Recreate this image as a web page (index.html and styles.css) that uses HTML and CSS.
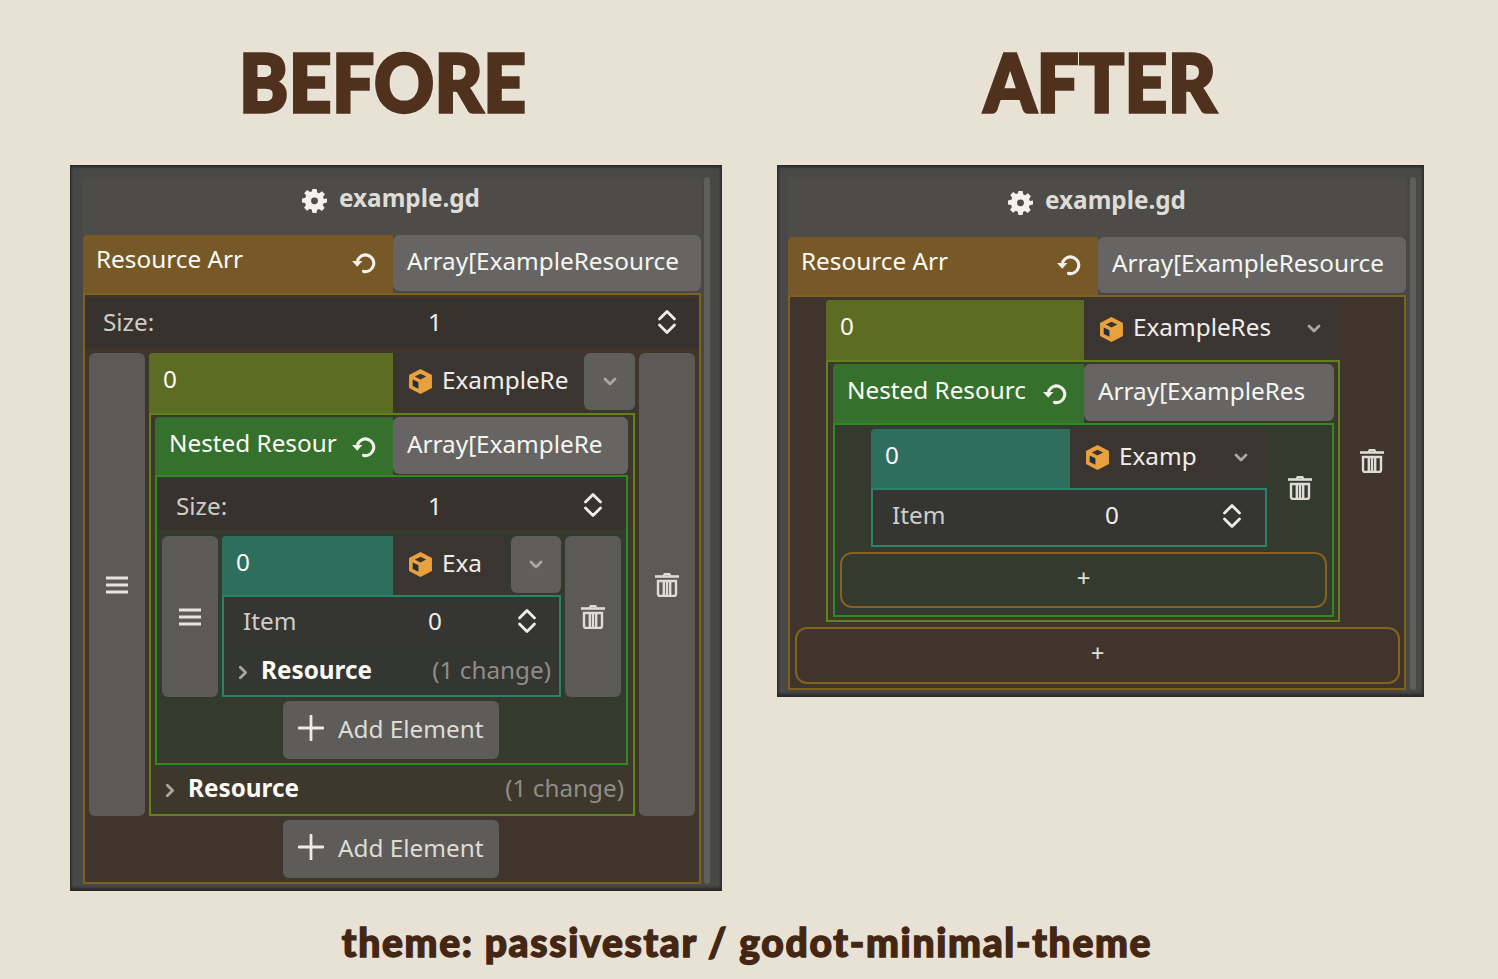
FILE: index.html
```html
<!DOCTYPE html>
<html lang="en">
<head>
<meta charset="utf-8">
<title>Before and after</title>
<link rel="stylesheet" href="styles.css">
</head>
<body>
<svg class="defs" width="0" height="0" aria-hidden="true">
  <symbol id="gear" viewBox="0 0 24 24"><path fill-rule="evenodd" d="M10 1h4l.6 3.2 1.9.8 2.7-1.8 2.8 2.8-1.8 2.7.8 1.9L24 10v4l-3.2.6-.8 1.9 1.8 2.7-2.8 2.8-2.7-1.800-1.900.8L14 24h-4l-.6-3.200-1.900-.8-2.700 1.800-2.800-2.800 1.800-2.700-.8-1.900L0 14v-4l3.200-.6.8-1.900L2.200 4.800 5 2l2.700 1.800 1.900-.8zM12 9a3.300 3.300 0 1 0 0 6.600 3.300 3.300 0 0 0 0-6.600z" fill="currentColor"/></symbol>
  <symbol id="undo" viewBox="0 0 24 24"><path d="M6.500 10.500A8 8 0 1 1 12 21.500" fill="none" stroke="currentColor" stroke-width="3" stroke-linecap="round"/><path d="M1 11.500l5 5.500 5-5.500z" fill="currentColor"/></symbol>
  <symbol id="cube" viewBox="0 0 24 24"><path d="M12 0l11 5.700v12.600L12 24 1 18.300V5.700z" fill="#e8a13c"/><path d="M12 4.500l5.500 2.800L12 10 6.500 7.300z" fill="#3a3431"/><path d="M4.500 10l5.500 2.800V19l-5.500-2.800z" fill="#1f3040"/></symbol>
  <symbol id="chev" viewBox="0 0 14 10"><path d="M2 2l5 5 5-5" fill="none" stroke="currentColor" stroke-width="2.800" stroke-linecap="round" stroke-linejoin="round"/></symbol>
  <symbol id="updown" viewBox="0 0 20 26"><path d="M2.500 10L10 2.500 17.500 10M2.500 16l7.500 7.500 7.500-7.500" fill="none" stroke="currentColor" stroke-width="2.800" stroke-linecap="round" stroke-linejoin="round"/></symbol>
  <symbol id="menu" viewBox="0 0 22 18"><path d="M0 2h22M0 9h22M0 16h22" stroke="currentColor" stroke-width="3"/></symbol>
  <symbol id="trash" viewBox="0 0 24 24"><path d="M8.500 3l1-2h5l1 2" fill="none" stroke="currentColor" stroke-width="1.800"/><path d="M0 3.500h24" stroke="currentColor" stroke-width="2.600"/><path d="M3 8h18v13a2 2 0 0 1-2 2H5a2 2 0 0 1-2-2z" fill="none" stroke="currentColor" stroke-width="2.400"/><path d="M8.800 9v13M12 9v13M15.200 9v13" stroke="currentColor" stroke-width="2.400"/></symbol>
  <symbol id="plus" viewBox="0 0 26 26"><path d="M13 1v24M1 13h24" stroke="currentColor" stroke-width="2.800" stroke-linecap="round"/></symbol>
  <symbol id="caret" viewBox="0 0 10 14"><path d="M2 2l5 5-5 5" fill="none" stroke="currentColor" stroke-width="2.600" stroke-linecap="round" stroke-linejoin="round"/></symbol>
</svg>

<main class="page">
  <section class="col col-before">
    <h1 class="title title-before">BEFORE</h1>
    <div class="panel panel-before">
      <div class="body">
        <div class="script"><svg class="i-gear"><use href="#gear"/></svg><span>example.gd</span></div>
        <div class="head">
          <div class="label orange label-root"><span>Resource Arr</span><svg class="i-undo"><use href="#undo"/></svg></div>
          <div class="value">Array[ExampleResource</div>
        </div>
        <div class="box box-orange box-root">
          <div class="row row-size">
            <span class="row-name">Size:</span><span class="row-val">1</span><svg class="i-updown"><use href="#updown"/></svg>
          </div>
          <div class="entry">
            <div class="handle"><svg class="i-menu"><use href="#menu"/></svg></div>
            <div class="entry-main">
              <div class="head">
                <div class="label olive el-a">0</div>
                <div class="drop drop-a"><svg class="i-cube"><use href="#cube"/></svg><span>ExampleRe</span></div>
                <div class="arrow"><svg class="i-chev"><use href="#chev"/></svg></div>
              </div>
              <div class="box box-olive box-a">
                <div class="head">
                  <div class="label green nl-a"><span>Nested Resour</span><svg class="i-undo"><use href="#undo"/></svg></div>
                  <div class="value nv-a">Array[ExampleRe</div>
                </div>
                <div class="box box-green box-b">
                  <div class="row row-size row-b">
                    <span class="row-name">Size:</span><span class="row-val">1</span><svg class="i-updown"><use href="#updown"/></svg>
                  </div>
                  <div class="entry entry-b">
                    <div class="handle"><svg class="i-menu"><use href="#menu"/></svg></div>
                    <div class="entry-main em-b">
                      <div class="head">
                        <div class="label teal tl-b">0</div>
                        <div class="drop drop-b"><svg class="i-cube"><use href="#cube"/></svg><span>Exa</span></div>
                        <div class="arrow arrow-b"><svg class="i-chev"><use href="#chev"/></svg></div>
                      </div>
                      <div class="box box-teal box-c">
                        <div class="row row-item">
                          <span class="row-name">Item</span><span class="row-val">0</span><svg class="i-updown"><use href="#updown"/></svg>
                        </div>
                        <div class="group group-c">
                          <svg class="i-caret"><use href="#caret"/></svg><b>Resource</b><span class="changes">(1 change)</span>
                        </div>
                      </div>
                    </div>
                    <div class="handle"><svg class="i-trash"><use href="#trash"/></svg></div>
                  </div>
                  <div class="add-row add-inner"><button class="add"><svg class="i-plus"><use href="#plus"/></svg>Add Element</button></div>
                </div>
                <div class="group group-a">
                  <svg class="i-caret"><use href="#caret"/></svg><b>Resource</b><span class="changes">(1 change)</span>
                </div>
              </div>
            </div>
            <div class="handle"><svg class="i-trash"><use href="#trash"/></svg></div>
          </div>
          <div class="add-row add-root"><button class="add"><svg class="i-plus"><use href="#plus"/></svg>Add Element</button></div>
        </div>
      </div>
      <div class="scroll"></div>
    </div>
  </section>

  <section class="col col-after">
    <h1 class="title title-after">AFTER</h1>
    <div class="panel panel-after">
      <div class="body">
        <div class="script script-after"><svg class="i-gear"><use href="#gear"/></svg><span>example.gd</span></div>
        <div class="head">
          <div class="label orange label-root"><span>Resource Arr</span><svg class="i-undo"><use href="#undo"/></svg></div>
          <div class="value">Array[ExampleResource</div>
        </div>
        <div class="box box-orange box-root-after">
          <div class="flat flat-1">
            <div class="entry-main em-x">
              <div class="head">
                <div class="label olive xl-a">0</div>
                <div class="drop xd-a"><svg class="i-cube"><use href="#cube"/></svg><span>ExampleRes</span><svg class="i-chev"><use href="#chev"/></svg></div>
              </div>
              <div class="box box-olive xb-a">
                <div class="head">
                  <div class="label green xl-b"><span>Nested Resourc</span><svg class="i-undo"><use href="#undo"/></svg></div>
                  <div class="value xv-b">Array[ExampleRes</div>
                </div>
                <div class="box box-green xb-b">
                  <div class="flat flat-2">
                    <div class="entry-main em-y">
                      <div class="head">
                        <div class="label teal xl-c">0</div>
                        <div class="drop xd-c"><svg class="i-cube"><use href="#cube"/></svg><span>Examp</span><svg class="i-chev"><use href="#chev"/></svg></div>
                      </div>
                      <div class="box box-teal xb-c">
                        <div class="row row-item row-x">
                          <span class="row-name">Item</span><span class="row-val">0</span><svg class="i-updown"><use href="#updown"/></svg>
                        </div>
                      </div>
                    </div>
                    <div class="trash-cell"><svg class="i-trash"><use href="#trash"/></svg></div>
                  </div>
                  <button class="ghost ghost-in">+</button>
                </div>
              </div>
            </div>
            <div class="trash-cell"><svg class="i-trash"><use href="#trash"/></svg></div>
          </div>
          <button class="ghost ghost-out">+</button>
        </div>
      </div>
      <div class="scroll"></div>
    </div>
  </section>

  <footer class="credit">theme: passivestar / godot-minimal-theme</footer>
</main>
</body>
</html>
```
FILE: styles.css
```css
* { box-sizing: border-box; }
html, body { margin: 0; padding: 0; }
body {
  width: 1498px;
  height: 979px;
  overflow: hidden;
  background: #e8e2d5;
  color: #f0eee8;
  font-family: "Noto Sans", sans-serif;
  font-size: 24.300px;
}
.defs { position: absolute; }
svg { display: block; flex: none; }

.page {
  display: grid;
  grid-template-columns: 652px 647px;
  column-gap: 55px;
  padding-left: 70px;
  align-content: start;
}
.col { display: flex; flex-direction: column; }
.title {
  height: 165px;
  margin: 0;
  padding-top: 35px;
  color: #4f311e;
  font-family: "Lato", sans-serif;
  font-weight: 900;
  font-size: 80px;
  line-height: 92px;
  letter-spacing: 1px;
  text-align: center;
  transform: scaleX(0.92);
  -webkit-text-stroke: 3.500px #4f311e;
  text-shadow: 0 0 4px #fffbe6;
}
.title-before { margin-right: 26px; }
.credit {
  grid-column: 1 / -1;
  justify-self: start;
  width: 1494px;
  margin-left: -70px;
  height: 88px;
  padding-top: 24px;
  text-align: center;
  color: #432714;
  font-family: "Lato", sans-serif;
  font-weight: 900;
  font-size: 39px;
  line-height: 54px;
  letter-spacing: 1.700px;
  -webkit-text-stroke: 1.400px #432714;
}

.panel {
  display: flex;
  align-items: stretch;
  background: #484846;
  box-shadow: inset 0 2px 3px #2a2a28, inset 0 -3px 3px #2a2a28, inset 1px 0 3px #363634, inset -1px 0 3px #363634;
}
.panel-before { width: 652px; height: 726px; padding: 12px 12px 7px 13px; column-gap: 3px; }
.panel-after { width: 647px; height: 532px; padding: 12px 8px 7px 11px; column-gap: 4px; }
.body { width: 618px; display: flex; flex-direction: column; }
.scroll { width: 6px; background: #5f5e5b; border-radius: 3px; }

.script {
  height: 58px;
  display: flex;
  align-items: center;
  justify-content: center;
  column-gap: 12px;
  padding: 0 2px 18px 0;
  background: #4d4c48;
  font-weight: 700;
  color: #dedcd6;
  border-radius: 3px;
}
.script-after { height: 60px; padding: 0 0 16px 0; }
.i-gear { width: 25px; height: 25px; color: #f3f1ec; margin-top: 6px; }
.i-undo { width: 25px; height: 25px; color: #f3f1ec; margin-top: 6px; }
.i-cube { width: 25px; height: 25px; }
.i-chev { width: 14px; height: 10px; color: #a9a7a1; }
.i-updown { width: 20px; height: 26px; color: #f0eee8; }
.i-menu { width: 22px; height: 18px; color: #e6e4de; }
.i-trash { width: 24px; height: 24px; color: #dedcd6; }
.i-plus { width: 26px; height: 26px; color: #eceae4; }
.i-caret { width: 11px; height: 15px; color: #a9a7a1; margin-top: 6px; }

.head { display: flex; align-items: flex-start; }
.label {
  height: 58px;
  display: flex;
  align-items: center;
  justify-content: space-between;
  padding: 0 17px 12px 13px;
  color: #fbfaf5;
  border-radius: 4px 0 0 0;
  flex: none;
}
.label-root { width: 310px; }
.orange { background: #775827; }
.olive { background: #5c6c22; padding: 0 14px 10px; }
.green { background: #35702c; padding: 0 17px 8px 14px; }
.teal { background: #2e6e5c; padding: 0 14px 9px; }
.value {
  flex: 1;
  height: 56px;
  display: flex;
  align-items: center;
  padding: 0 14px 5px;
  background: #666563;
  border-radius: 6px;
  color: #f6f5f0;
  white-space: nowrap;
  overflow: hidden;
}
.drop {
  height: 57px;
  display: flex;
  align-items: center;
  column-gap: 9px;
  padding-left: 15px;
  background: #3b3532;
  border-radius: 0 0 6px 6px;
  white-space: nowrap;
  flex: none;
}
.drop span { margin-bottom: 5px; }
.arrow {
  flex: 1;
  height: 57px;
  margin-left: 1px;
  display: flex;
  align-items: center;
  justify-content: center;
  background: #5f5e5b;
  border-radius: 6px;
}

.box { border: 2px solid; }
.box-orange { border-color: #80601f; background: #3f352d; }
.box-olive { border-color: #5f821b; background: #3d372c; }
.box-green { border-color: #2f8a25; background: #343a2d; }
.box-teal { border-color: #2c8268; background: #343632; }

.box-root { height: 591px; padding-top: 3px; display: flex; flex-direction: column; }
.row { display: flex; align-items: center; }
.row-name { color: #cfcdc7; }
.row-size { height: 50px; padding: 0 0 3px 18px; background: #38322e; flex: none; }
.row-size .row-name { width: 325px; }
.row-size .row-val { width: 229px; }
.row-b { padding: 0 0 0 19px; }
.row-b .row-name { width: 252px; }
.row-b .row-val { width: 155px; }
.entry { display: flex; column-gap: 4px; padding: 5px 4px 0; flex: none; }
.handle {
  width: 56px;
  display: flex;
  align-items: center;
  justify-content: center;
  background: #5b5a56;
  border-radius: 6px;
  flex: none;
}
.entry-main { width: 486px; flex: none; }
.el-a { width: 244px; height: 60px; }
.drop-a { width: 190px; }
.box-a { height: 403px; padding: 2px 5px 0 4px; }
.nl-a { width: 238px; }
.nv-a { height: 57px; }
.box-b { height: 290px; padding-top: 3px; display: flex; flex-direction: column; }
.entry-b { padding: 6px 4px 0 5px; }
.em-b { width: 339px; }
.tl-b { width: 171px; height: 59px; }
.drop-b { width: 117px; }
.box-c { height: 102px; padding-top: 3px; }
.row-item { height: 45px; background: #353533; padding: 0 0 3px 19px; }
.row-item .row-name { width: 185px; margin-bottom: 2px; }
.row-item .row-val { width: 89px; margin-bottom: 2px; }
.group { display: flex; align-items: center; }
.group b { font-weight: 700; color: #fbfaf5; }
.changes { margin-left: auto; color: #8f8d86; }
.group-c { margin-top: 5px; height: 42px; padding: 0 8px 4px 14px; }
.group-c .i-caret { margin-right: 12px; }
.group-a { height: 47px; padding: 0 4px 2px 10px; }
.group-a .i-caret { margin-right: 12px; }
.add-row { display: flex; justify-content: center; padding-top: 4px; }
.add-inner { padding-right: 1px; }
.add-root { padding-right: 2px; }
.add {
  width: 216px;
  height: 58px;
  display: flex;
  align-items: center;
  column-gap: 14px;
  padding: 0 0 4px 15px;
  background: #5d5c58;
  border: 0;
  border-radius: 6px;
  color: #dedcd6;
  font: inherit;
}

.box-root-after { height: 395px; padding-top: 3px; display: flex; flex-direction: column; }
.flat { display: flex; flex: none; padding-left: 36px; }
.trash-cell { flex: 1; display: flex; align-items: center; justify-content: center; }
.em-x { width: 514px; }
.xl-a { width: 258px; height: 60px; }
.xd-a { width: 255px; height: 58px; }
.xd-a .i-chev { margin-left: auto; margin-right: 18px; }
.xd-c .i-chev { margin-left: auto; margin-right: 19px; }
.xb-a { height: 262px; padding: 2px 4px 0 5px; }
.xl-b { width: 251px; height: 59px; }
.xv-b { height: 57px; }
.xb-b { height: 194px; padding-top: 4px; display: flex; flex-direction: column; }
.em-y { width: 396px; }
.xl-c { width: 199px; height: 59px; }
.xd-c { width: 197px; }
.xb-c { height: 59px; }
.row-x { height: 55px; }
.row-x .row-name { width: 213px; margin-bottom: 4px; }
.row-x .row-val { width: 117px; margin-bottom: 4px; }
.ghost {
  display: block;
  background: transparent;
  border: 2px solid #85621f;
  border-radius: 12px;
  color: #e2e0da;
  font-family: "Noto Sans", sans-serif;
  font-size: 24px;
  padding: 0 0 6px;
  flex: none;
}
.ghost-in { width: 487px; height: 56px; margin: 5px 0 0 5px; }
.ghost-out { width: 605px; height: 57px; margin: 5px 0 0 5px; }
```
